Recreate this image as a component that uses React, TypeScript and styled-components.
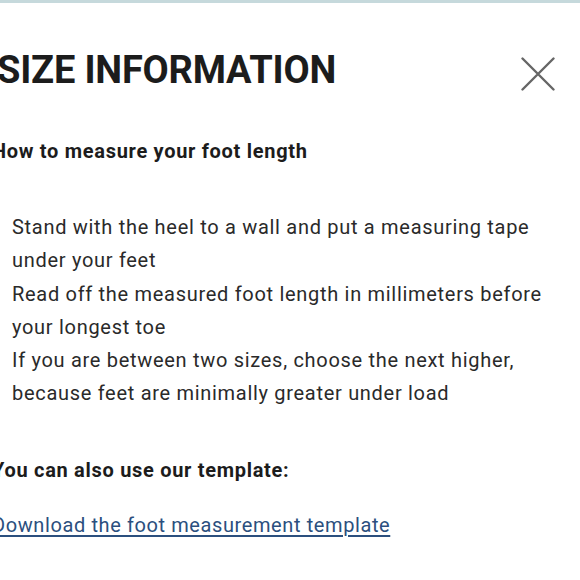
import styled, {createGlobalStyle} from 'styled-components';

const GlobalStyle = createGlobalStyle`
  html, body {
    margin: 0;
    padding: 0;
    background: #fff;
    overflow: hidden;
  }
  body {
    font-family: Roboto, "Noto Sans", sans-serif;
    color: #222;
  }
`;

const steps = [
    'Stand with the heel to a wall and put a measuring tape under your feet',
    'Read off the measured foot length in millimeters before your longest toe',
    'If you are between two sizes, choose the next higher, because feet are minimally greater under load',
];

function App() {
    return (
        <>
            <GlobalStyle/>
            <Modal>
                <Header>
                    <Title>SIZE INFORMATION</Title>
                    <CloseButton aria-label="Close">
                        <svg width="34" height="34" viewBox="0 0 34 34">
                            <path d="M1.5 1.5 L32.5 32.5 M32.5 1.5 L1.5 32.5" stroke="#666" strokeWidth="2.4" strokeLinecap="round"/>
                        </svg>
                    </CloseButton>
                </Header>
                <Content>
                    <SubTitle>How to measure your foot length</SubTitle>
                    <Steps>
                        {steps.map(s => <Step key={s}>{s}</Step>)}
                    </Steps>
                    <SubTitle>You can also use our template:</SubTitle>
                    <Link href="#">Download the foot measurement template</Link>
                </Content>
            </Modal>
        </>
    );
}

export default App;

const Modal = styled.div`
  width: 580px;
  height: 580px;
  box-sizing: border-box;
  border-top: 3px solid #c6d9dc;
  background: #fff;
`;

const Header = styled.div`
  display: flex;
  align-items: flex-start;
  justify-content: space-between;
  padding: 44px 25px 0 0;
  margin-left: -3px;
`;

const Title = styled.h1`
  margin: 0;
  font-size: 38px;
  font-weight: 700;
  line-height: 46px;
  color: #1c1c1c;
  letter-spacing: -0.2px;
`;

const CloseButton = styled.button`
  border: 0;
  background: none;
  padding: 0;
  margin-top: 10px;
  width: 34px;
  height: 34px;
  cursor: pointer;
  display: flex;
`;

const Content = styled.div`
  margin-left: -8px;
  padding-top: 46px;
  display: flex;
  flex-direction: column;
`;

const SubTitle = styled.h3`
  margin: 0;
  font-size: 20px;
  font-weight: 700;
  line-height: 24px;
  letter-spacing: 0.7px;
  color: #1c1c1c;
`;

const Steps = styled.ul`
  list-style: none;
  margin: 48px 0 47px;
  padding: 0 0 0 20px;
  max-width: 530px;
`;

const Step = styled.li`
  font-size: 20px;
  line-height: 33.3px;
  letter-spacing: 0.7px;
  color: #2a2a2a;
`;

const Link = styled.a`
  align-self: flex-start;
  margin-top: 30px;
  font-size: 20px;
  line-height: 26px;
  letter-spacing: 0.6px;
  color: #2b4f7e;
  text-decoration: underline;
  text-underline-offset: 3px;
`;
